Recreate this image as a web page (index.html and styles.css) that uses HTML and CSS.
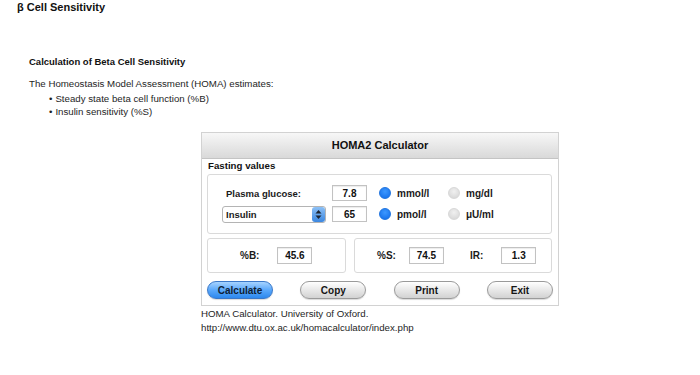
FILE: index.html
```html
<!DOCTYPE html>
<html>
<head lang="en">
	<meta charset="UTF-8">
	<title>β Cell Sensitivity</title>
	<link rel="stylesheet" href="styles.css">
</head>
<body>

<h1 class="page-title">β Cell Sensitivity</h1>

<div class="intro">
	<h2>Calculation of Beta Cell Sensitivity</h2>
	<p>The Homeostasis Model Assessment (HOMA) estimates:</p>
	<ul>
		<li>Steady state beta cell function (%B)</li>
		<li>Insulin sensitivity (%S)</li>
	</ul>
</div>

<div class="calc-holder">

	<form class="calc">
		<div class="calc-head">HOMA2 Calculator</div>

		<div class="calc-body">
			<h3>Fasting values</h3>

			<div class="box inputs">
				<div class="row">
					<label class="name" for="glucose">Plasma glucose:</label>
					<input class="num" type="text" id="glucose" value="7.8" />
					<label class="unit"><input type="radio" name="g_unit" checked /> mmol/l</label>
					<label class="unit"><input type="radio" name="g_unit" /> mg/dl</label>
				</div>
				<div class="row">
					<div class="select">
						<span>Insulin</span>
						<span class="stepper">
							<svg width="7" height="11" viewBox="0 0 7 11">
								<path d="M3.5 1 L6.5 4.5 L0.5 4.5 Z" fill="#1b2433"/>
								<path d="M3.5 10 L6.5 6.5 L0.5 6.5 Z" fill="#1b2433"/>
							</svg>
						</span>
					</div>
					<input class="num" type="text" id="insulin" value="65" />
					<label class="unit"><input type="radio" name="i_unit" checked /> pmol/l</label>
					<label class="unit"><input type="radio" name="i_unit" /> μU/ml</label>
				</div>
			</div>

			<div class="results">
				<div class="box result-b">
					<label for="res_b">%B:</label>
					<input class="num" type="text" id="res_b" value="45.6" />
				</div>
				<div class="box result-s">
					<label for="res_s">%S:</label>
					<input class="num" type="text" id="res_s" value="74.5" />
					<label class="ir" for="res_ir">IR:</label>
					<input class="num" type="text" id="res_ir" value="1.3" />
				</div>
			</div>

			<div class="buttons">
				<button type="button" class="primary">Calculate</button>
				<button type="button">Copy</button>
				<button type="button">Print</button>
				<button type="button">Exit</button>
			</div>
		</div>
	</form>

	<p class="source">HOMA Calculator. University of Oxford.<br/>
		http://www.dtu.ox.ac.uk/homacalculator/index.php</p>

</div>

</body>
</html>
```

FILE: styles.css
```css
* {
	margin: 0;
	padding: 0;
	box-sizing: border-box;
	font-family: "Liberation Sans", "Helvetica", "Arial", sans-serif;
}
body {
	background: #ffffff;
	color: #1e1e1e;
}
.page-title {
	font-size: 11px;
	line-height: 14px;
	font-weight: 700;
	padding-left: 17px;
	color: #111111;
}
.intro {
	padding: 41px 0 0 29px;
	font-size: 9.7px;
	line-height: 13px;
}
.intro h2 {
	font-size: 9.5px;
	font-weight: 700;
	color: #111111;
}
.intro p {
	margin-top: 9px;
}
.intro ul {
	list-style: none;
	margin-top: 2px;
	padding-left: 20px;
}
.intro ul li:before {
	content: "\2022";
	margin-right: 3px;
}

.calc-holder {
	margin: 14px 0 0 201px;
	width: 358px;
}
.calc {
	border: 1px solid #d2d2d2;
	background: #ffffff;
}
.calc-head {
	height: 26px;
	line-height: 25px;
	text-align: center;
	font-size: 11px;
	font-weight: 700;
	color: #111111;
	background: linear-gradient(#f7f7f7, #d9d9d9);
	border-bottom: 1px solid #c4c4c4;
}
.calc-body {
	padding: 0 5px 6px 5px;
}
.calc-body h3 {
	font-size: 9.7px;
	line-height: 13px;
	font-weight: 700;
	padding-left: 1px;
	color: #111111;
}
.box {
	border: 1px solid #dadada;
	border-radius: 3px;
	background: #ffffff;
}
.inputs {
	margin-top: 2px;
	margin-right: 1px;
	padding: 10px 0 11px 14px;
	display: flex;
	flex-direction: column;
	gap: 5px;
}
.row {
	display: flex;
	align-items: center;
	height: 16px;
}
.row .name {
	width: 110px;
	padding-left: 4px;
	font-size: 9.5px;
}
label, .select span {
	font-size: 10px;
	font-weight: 700;
	color: #1a1a1a;
}
.select span {
	font-size: 9.5px;
}
.num {
	width: 35px;
	height: 17px;
	border: 1px solid #c2c2c2;
	box-shadow: inset 0 1px 1px rgba(0, 0, 0, 0.08);
	font-size: 10px;
	font-weight: 700;
	text-align: center;
	color: #111111;
	background: #ffffff;
}
.row .num {
	height: 16px;
	margin-right: 12px;
}
.select {
	width: 104px;
	height: 17px;
	margin-right: 6px;
	display: flex;
	align-items: center;
	justify-content: space-between;
	border: 1px solid #b4b4b4;
	border-radius: 3px;
	padding-left: 3px;
	background: #ffffff;
}
.select .stepper {
	width: 13px;
	height: 15px;
	border-radius: 3px;
	display: flex;
	align-items: center;
	justify-content: center;
	background: linear-gradient(#8cc0f6, #3b87e0);
}
.unit {
	width: 69px;
	display: flex;
	align-items: center;
	gap: 6px;
}
.unit input {
	appearance: none;
	-webkit-appearance: none;
	width: 12px;
	height: 12px;
	border-radius: 50%;
	background: radial-gradient(circle at 50% 35%, #f0f0f0, #d3d3d3);
	border: 1px solid #d8d8d8;
}
.unit input:checked {
	background: radial-gradient(circle at 50% 35%, #3d98ff, #0f6be8);
	border-color: #1f74e0;
}

.results {
	display: flex;
	gap: 8px;
	margin-top: 4px;
	margin-right: 1px;
}
.results .box {
	height: 35px;
	display: flex;
	align-items: center;
}
.result-b {
	width: 139px;
	padding-left: 32px;
}
.result-b .num {
	margin-left: 18px;
}
.result-s {
	flex: 1;
	padding-left: 22px;
}
.result-s .num {
	margin-left: 13px;
}
.result-s .ir {
	margin-left: 26px;
}
.result-s .ir + .num {
	margin-left: 18px;
}

.buttons {
	display: flex;
	justify-content: space-between;
	margin-top: 8px;
}
button {
	width: 66px;
	height: 18px;
	border-radius: 9px;
	border: 1px solid #9a9a9a;
	background: linear-gradient(#ffffff, #e8e8e8 50%, #d2d2d2);
	box-shadow: 0 1px 1px rgba(0, 0, 0, 0.15);
	font-size: 10px;
	font-weight: 700;
	color: #151515;
	cursor: pointer;
}
button.primary {
	border-color: #3a78c9;
	background: linear-gradient(#a6d3ff, #5aa8fb 50%, #2c88ee);
	color: #0e1e36;
}

.source {
	margin-top: 1px;
	font-size: 9.7px;
	line-height: 14px;
	color: #1e1e1e;
}
```
